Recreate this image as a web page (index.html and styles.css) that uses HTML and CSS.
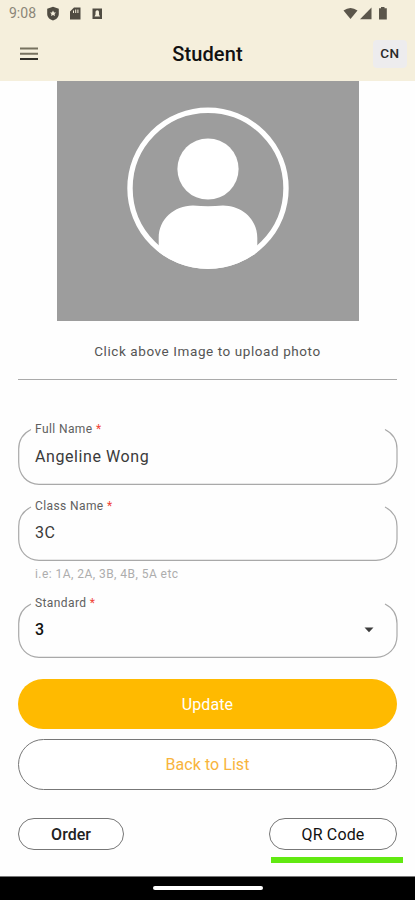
FILE: index.html
```html
<!DOCTYPE html>
<html lang="en">
<head>
<meta charset="utf-8">
<title>Student</title>
<link rel="stylesheet" href="styles.css">
</head>
<body>
<header class="top">
  <div class="status">
    <span class="clock">9:08</span>
    <svg class="status-left" width="58" height="16" viewBox="0 0 58 16" fill="#504c42">
      <path fill-rule="evenodd" d="M6 .8 11.800 2.800V8C11.800 11.500 9 13.500 6 14.500 3 13.500 .2 11.500.2 8V2.800ZM6 4.500 7 6.500H9L7.500 8 8 10 6 9 4 10 4.500 8 3 6.500H5Z"/>
      <path fill-rule="evenodd" d="M27 1.500H33.500V13.500H23V5.500ZM26 4.500V7H27V4.500ZM28.200 3.500V7H29.200V3.500ZM30.400 3.500V7H31.400V3.500Z"/>
      <path fill-rule="evenodd" d="M45.500 2.500H55V13H45.500ZM50.300 4.200C48.800 4.200 48.500 5.500 48.500 6.500V8.500L47.500 10.600H53L52 8.500V6.500C52 5.500 51.800 4.200 50.300 4.200Z"/>
    </svg>
    <svg class="status-right" width="46" height="16" viewBox="0 0 46 16" fill="#5b564b">
      <path d="M.5 4.500Q7.500-.5 14.500 4.500L7.500 13Z"/>
      <path d="M28.500 1.500V13.200H17Z"/>
      <path d="M38 1H41.500V2.300H43.800V13.500H36V2.300H38Z"/>
    </svg>
  </div>
  <div class="bar">
    <svg class="menu" width="18" height="14" viewBox="0 0 18 14">
      <path d="M0 1.600H18M0 6.700H18" stroke="#77725f" stroke-width="2"/>
      <path d="M0 12H18" stroke="#302e28" stroke-width="2"/>
    </svg>
    <h1 class="title">Student</h1>
    <button class="lang">CN</button>
  </div>
</header>
<main class="page">
  <svg class="photo" width="302" height="240" viewBox="57 81 302 240">
    <rect x="57" y="81" width="302" height="240" fill="#9d9d9d"/>
    <clipPath id="disc"><circle cx="208" cy="188.300" r="80.500"/></clipPath>
    <circle cx="208" cy="188.300" r="78" fill="none" stroke="#fff" stroke-width="5.400"/>
    <circle cx="208" cy="169" r="30.600" fill="#fff"/>
    <path clip-path="url(#disc)" fill="#fff" d="M158.700 270V238C158.700 219 174 206 193 205.600Q208 206.800 223 205.600C242 206 257.300 219 257.300 238V270Z"/>
  </svg>
  <p class="caption">Click above Image to upload photo</p>
  <hr class="rule">
  <form class="form">
    <div class="field">
      <svg class="outline" width="380" height="58" viewBox="0 0 380 58"><path d="M13 2.500C6 6 .7 12 .7 22V35C.7 48 9 57.300 21 57.300H358C370 57.300 379 48 379 35V22C379 12 374 6 367 2.500"/></svg>
      <span class="label">Full Name <b>*</b></span>
      <span class="value name-value">Angeline Wong</span>
    </div>
    <div class="field second">
      <svg class="outline" width="380" height="58" viewBox="0 0 380 58"><path d="M13 4C6 7.500 .7 13.500 .7 23.500V36C.7 48 9 57.300 21 57.300H358C370 57.300 379 48 379 36V23.500C379 13.500 374 7.500 367 4"/></svg>
      <span class="label">Class Name <b>*</b></span>
      <span class="value">3C</span>
    </div>
    <p class="hint">i.e: 1A, 2A, 3B, 4B, 5A etc</p>
    <div class="field third">
      <svg class="outline" width="380" height="58" viewBox="0 0 380 58"><path d="M13 4C6 7.500 .7 13.500 .7 23.500V36C.7 48 9 57.300 21 57.300H358C370 57.300 379 48 379 36V23.500C379 13.500 374 7.500 367 4"/></svg>
      <span class="label">Standard <b>*</b></span>
      <span class="value chosen">3</span>
      <svg class="caret" width="10" height="6" viewBox="0 0 10 6"><path d="M.5.500H9.500L5 5.300Z" fill="#3c3c3c"/></svg>
    </div>
    <button type="button" class="btn primary">Update</button>
    <button type="button" class="btn back">Back to List</button>
    <div class="pair">
      <button type="button" class="pill order">Order</button>
      <button type="button" class="pill qr">QR Code</button>
    </div>
    <div class="mark"></div>
  </form>
</main>
<footer class="nav"><div class="handle"></div></footer>
</body>
</html>
```
FILE: styles.css
```css
* { box-sizing: border-box; }
body {
  margin: 0;
  width: 415px;
  height: 900px;
  overflow: hidden;
  display: flex;
  flex-direction: column;
  background: #fefefe;
  font-family: Roboto, sans-serif;
  color: #3a3a3a;
  white-space: nowrap;
}
button { font-family: inherit; padding: 0; }
.top { height: 81px; background: #f5efdc; flex: none; }
.status { height: 27px; display: flex; align-items: center; padding: 0 26px 0 9px; }
.clock { font-size: 14px; line-height: 27px; color: #8b8678; width: 38px; letter-spacing: 0; }
.status-right { margin-left: auto; }
.status svg { display: block; }
.bar { height: 54px; display: grid; grid-template-columns: 60px 1fr 60px; align-items: center; }
.menu { margin-left: 20px; margin-bottom: 2px; }
.title { margin: 0 0 1px; text-align: center; font-size: 20px; font-weight: 500; color: #111; line-height: 54px; letter-spacing: .1px; }
.lang { width: 34px; height: 28px; margin: 0 8px 2px auto; padding-bottom: 1px; border: 0; border-radius: 4px; background: #edecee; color: #292929; font-size: 13.5px; font-weight: 500; letter-spacing: .6px; }
.page { height: 795px; flex: none; display: flex; flex-direction: column; padding: 0 18px; }
.photo { display: block; margin-left: 39px; flex: none; }
.caption { margin: 20px 0 0; height: 22px; line-height: 21px; text-align: center; font-size: 13.500px; letter-spacing: .58px; color: #555; }
.rule { width: 379px; height: 1px; margin: 16px 0 0; border: 0; background: #aaa; flex: none; }
.form { display: flex; flex-direction: column; }
.field { height: 58px; margin-top: 47px; position: relative; display: flex; flex-direction: column; padding-left: 17px; }
.second { margin-top: 18px; }
.third { margin-top: 19px; }
.outline { position: absolute; left: 0; top: 0; }
.outline path { fill: none; stroke: #a9a9a9; stroke-width: 1.2; }
.label { font-size: 12px; line-height: 14px; margin-top: -5px; letter-spacing: .4px; color: #606060; }
.second .label { margin-top: -4px; }
.third .label { margin-top: -4px; }
.label b { font-weight: 400; color: #f04438; }
.value { font-size: 16px; line-height: 20px; margin-top: 10px; letter-spacing: .5px; }
.name-value { margin-top: 11px; letter-spacing: .58px; }
.chosen { color: #111; font-weight: 500; }
.caret { position: absolute; right: 23px; top: 27px; }
.hint { margin: 6px 0 0 17px; height: 14px; line-height: 14px; font-size: 12px; letter-spacing: .45px; color: #adadad; }
.btn { width: 379px; height: 51px; border-radius: 26px; font-size: 16px; font-weight: 400; letter-spacing: .1px; }
.primary { height: 50px; margin-top: 21px; background: #ffba00; border: 0; color: #fff; letter-spacing: .1px; }
.back { margin-top: 10px; background: #fff; border: 1px solid #777; color: #f8b43c; letter-spacing: .05px; }
.pair { display: flex; justify-content: space-between; margin-top: 28px; width: 379px; }
.pill { height: 32px; border: 1px solid #777; border-radius: 16px; background: #fff; color: #222; font-size: 16px; font-weight: 500; }
.order { width: 106px; }
.qr { width: 128px; font-weight: 400; letter-spacing: .15px; color: #111; }
.mark { width: 132px; height: 6px; margin: 7px 0 0 253px; background: #61e911; }
.nav { height: 24px; background: #000; border-top: 1px solid #777; display: flex; justify-content: center; padding-top: 9px; }
.handle { width: 110px; height: 4px; border-radius: 2px; background: #fff; }
```
